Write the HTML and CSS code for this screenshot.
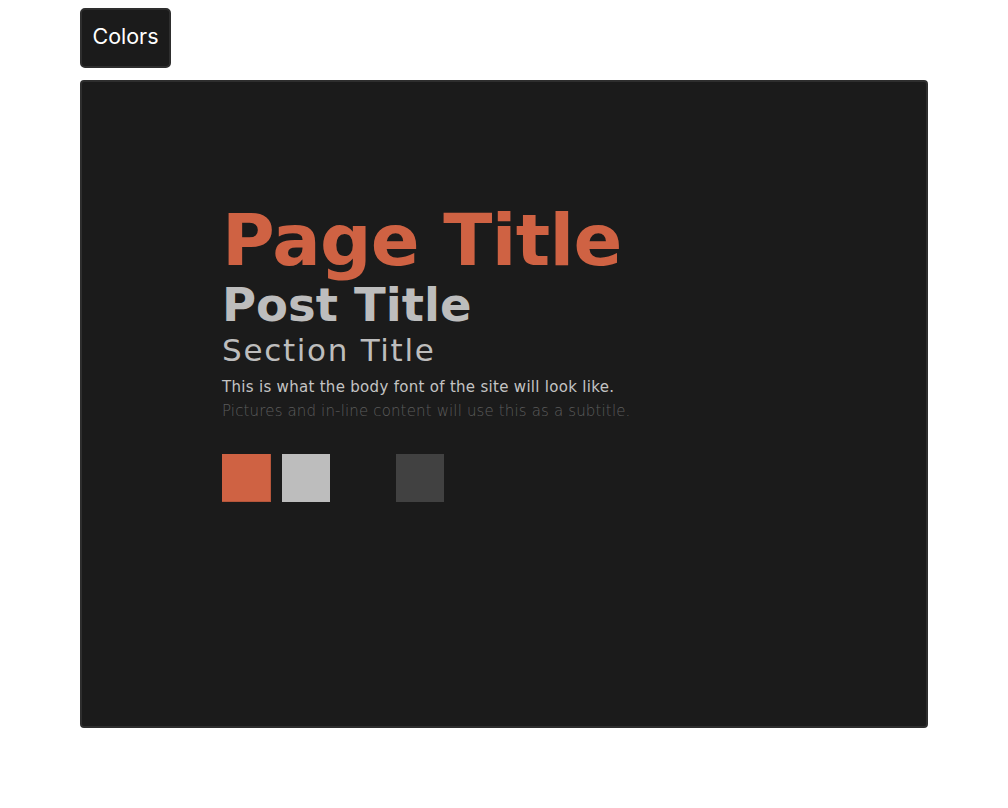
FILE: index.html
```html
<!DOCTYPE html>
<html>
<head>
<meta charset="utf-8">
<link rel="stylesheet" href="styles.css">
</head>
<body>
<div class="page">
  <button class="tab">Colors</button>
  <section class="panel">
    <div class="content">
      <h1 class="page-title">Page Title</h1>
      <h2 class="post-title">Post Title</h2>
      <h3 class="section-title">Section Title</h3>
      <p class="body-text">This is what the body font of the site will look like.</p>
      <p class="subtitle">Pictures and in-line content will use this as a subtitle.</p>
      <div class="swatches">
        <div class="swatch swatch-accent"></div>
        <div class="swatch swatch-light"></div>
        <div class="swatch swatch-bg"></div>
        <div class="swatch swatch-dark"></div>
      </div>
    </div>
  </section>
</div>
</body>
</html>
```

FILE: styles.css
```css
* { box-sizing: border-box; }
html, body { margin: 0; padding: 0; background: #ffffff; }
.page {
  padding: 8px 80px 0 80px;
  display: flex;
  flex-direction: column;
  align-items: flex-start;
  gap: 12px;
}
.tab {
  width: 91px;
  height: 60px;
  padding: 0 0 4px 0;
  background: #1b1b1b;
  color: #ffffff;
  border: 2px solid #2e2e2e;
  border-radius: 5px;
  font-family: "Inter", sans-serif;
  font-size: 21.5px;
  font-weight: 400;
}
.panel {
  width: 848px;
  height: 648px;
  background: #1b1b1b;
  border: 2px solid #2e2e2e;
  border-radius: 4px;
  padding: 0 0 0 140px;
}
.content {
  padding-top: 118px;
  display: flex;
  flex-direction: column;
  align-items: flex-start;
}
.page-title, .post-title, .section-title, .body-text, .subtitle { margin: 0; }
.page-title {
  font-family: "DejaVu Sans", sans-serif;
  font-weight: 700;
  font-size: 72px;
  line-height: 80px;
  letter-spacing: -0.7px;
  color: #cf6243;
}
.post-title {
  font-family: "DejaVu Sans", sans-serif;
  font-weight: 700;
  font-size: 46.5px;
  line-height: 50px;
  color: #bdbdbd;
}
.section-title {
  font-family: "DejaVu Sans", sans-serif;
  font-weight: 400;
  font-size: 31px;
  line-height: 40px;
  letter-spacing: 1.7px;
  color: #bdbdbd;
  margin-bottom: 5px;
}
.body-text {
  font-family: "DejaVu Sans", sans-serif;
  font-size: 15px;
  line-height: 24px;
  letter-spacing: 0.3px;
  color: #c4c4c4;
}
.subtitle {
  font-family: "DejaVu Sans", sans-serif;
  font-weight: 300;
  font-size: 15px;
  line-height: 24px;
  letter-spacing: 0.15px;
  color: #5c5c5c;
}
.swatches {
  display: flex;
  gap: 9px;
  margin-top: 31px;
}
.swatch { width: 48px; height: 48px; }
.swatch-accent { width: 49px; margin-right: 2px; background: #cf6243; border-right: 1px solid #b5563b; border-bottom: 1px solid #b5563b; }
.swatch-light { background: #bdbdbd; }
.swatch-bg { background: #1b1b1b; }
.swatch-dark { background: #414141; }
```
